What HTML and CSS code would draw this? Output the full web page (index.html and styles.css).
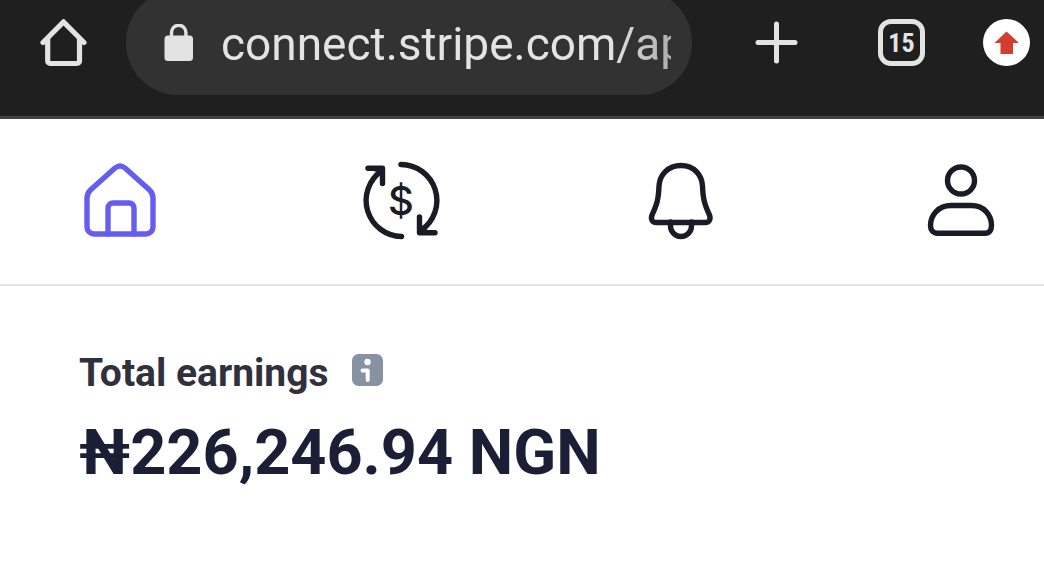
FILE: index.html
```html
<!DOCTYPE html>
<html lang="en">
<head>
    <meta charset="UTF-8">
    <meta name="viewport" content="width=device-width, initial-scale=1.0">
    <title>Total earnings</title>
    <link rel="stylesheet" href="styles.css">
</head>
<body>
    <header class="browser-bar">
        <button class="bar-button" type="button" aria-label="Home page">
            <svg width="48" height="48" viewBox="0 0 48 48" fill="none" stroke="currentColor" stroke-width="5.2" stroke-linecap="round">
                <path d="M3 23.5 23.5 3 44 23.5"/>
                <path d="M7.7 20V42a2.5 2.5 0 0 0 2.5 2.5H37a2.5 2.5 0 0 0 2.5-2.5V20"/>
            </svg>
        </button>

        <div class="address">
            <svg width="30" height="38" viewBox="0 0 30 38" aria-hidden="true">
                <rect x="0.5" y="11.5" width="28.5" height="25.5" rx="3.5" fill="currentColor"/>
                <path d="M7.5 14V8.5a7.2 7.2 0 0 1 14.4 0V14" fill="none" stroke="currentColor" stroke-width="3.4"/>
            </svg>
            <input class="address-input" type="text" aria-label="Address" value="connect.stripe.com/ap">
        </div>

        <button class="bar-button" type="button" aria-label="New tab">
            <svg width="44" height="44" viewBox="0 0 44 44" fill="none" stroke="currentColor" stroke-width="5" stroke-linecap="round">
                <path d="M22.5 3v37M4 21.5h37"/>
            </svg>
        </button>
        <button class="bar-button tab-count" type="button" aria-label="15 open tabs">15</button>
        <button class="bar-button update" type="button" aria-label="Update available">
            <svg width="26" height="24" viewBox="0 0 26 24" fill="currentColor">
                <path d="M12.5 0.5 25 12H19V23H6.5V12H0.5Z"/>
            </svg>
        </button>
    </header>

    <nav class="app-nav">
        <a class="nav-link active" href="#home" aria-label="Home">
            <svg width="80" height="80" viewBox="0 0 80 80">
                <path d="M7 37q0-5 4-8.5L35 7q5-4 10 0l24 21.5q4 3.5 4 8.5v29a7 7 0 0 1-7 7H14a7 7 0 0 1-7-7Z"/>
                <path d="M28 73V47a5 5 0 0 1 5-5h16a5 5 0 0 1 5 5v26"/>
            </svg>
        </a>
        <a class="nav-link" href="#payouts" aria-label="Payouts">
            <svg width="80" height="80" viewBox="0 0 80 80">
                <path d="M41 3.5a36 36 0 0 1 20.5 65.5"/>
                <path d="M59.5 56v15.7H75M60 66.5v4.5h6"/>
                <path d="M41.5 75.5a36 36 0 0 1-20-65.5"/>
                <path d="M22.500 22.5V7.200H8M22 12.5V8h-6"/>
                <text class="currency" x="41" y="54" text-anchor="middle">$</text>
            </svg>
        </a>
        <a class="nav-link" href="#notifications" aria-label="Notifications">
            <svg width="80" height="80" viewBox="0 0 80 80">
                <path d="M40 4.5C27 4.5 18.500 14 18 25 17.500 38 16 43 11.500 53 9 58 11 61.500 15.500 61.500H64C68.500 61.500 70.500 58 68 53 63.500 43 62 38 61.500 25 61 14 53 4.500 40 4.5Z"/>
                <path d="M29.500 61v4a10.500 10.500 0 0 0 21 0V61"/>
            </svg>
        </a>
        <a class="nav-link" href="#account" aria-label="Account">
            <svg width="80" height="80" viewBox="0 0 80 80">
                <circle cx="40" cy="19.5" r="13.500"/>
                <path d="M30 44.500H50.500C63 44.500 70.500 54 70.500 64.500 70.500 69 68.500 72.200 64 72.200H16.500C12 72.200 9.500 69 9.500 64.500 9.500 54 17.500 44.500 30 44.500Z"/>
            </svg>
        </a>
    </nav>

    <main class="earnings">
        <div class="earnings-label">
            <h1>Total earnings</h1>
            <button class="info" type="button" aria-label="About total earnings">
                <svg width="32" height="32" viewBox="0 0 32 32">
                    <rect width="31" height="32" rx="6.5" fill="#8792a2"/>
                    <circle cx="15.5" cy="8" r="3.2" fill="#fff"/>
                    <path d="M10.500 16.5h5.2V26" fill="none" stroke="#fff" stroke-width="4" stroke-linecap="round" stroke-linejoin="round"/>
                </svg>
            </button>
        </div>
        <p class="amount">₦226,246.94 NGN</p>
    </main>
</body>
</html>
```
FILE: styles.css
```css
* {
    margin: 0;
    padding: 0;
    box-sizing: border-box;
}

body {
    background-color: #fff;
    color: #1a1f36;
    font-family: Roboto, sans-serif;
    overflow-x: hidden;
}

svg {
    display: block;
}

button {
    border: none;
    background: none;
    color: inherit;
    font-family: inherit;
    cursor: pointer;
}

/* Browser toolbar */
.browser-bar {
    display: flex;
    align-items: center;
    height: 119px;
    padding: 0 14px 31px 40px;
    background-color: #1f1f1f;
    border-bottom: 3px solid #424242;
    color: #e3e3e3;
}

.bar-button {
    flex: none;
}

.address {
    display: flex;
    flex: 1;
    align-items: center;
    gap: 27px;
    min-width: 0;
    height: 105px;
    margin: 0 62px 0 38px;
    padding: 0 21px 0 38px;
    border-radius: 52px;
    background-color: #323232;
}

.address svg {
    flex: none;
}

.address-input {
    flex: 1;
    min-width: 0;
    padding-top: 2px;
    border: none;
    outline: none;
    background: none;
    color: inherit;
    font-family: inherit;
    font-size: 46px;
    line-height: 60px;
    -webkit-mask-image: linear-gradient(to right, #000 calc(100% - 60px), rgba(0, 0, 0, 0.7));
    mask-image: linear-gradient(to right, #000 calc(100% - 60px), rgba(0, 0, 0, 0.7));
}

.tab-count {
    width: 47px;
    height: 47px;
    margin: 0 58px 0 80px;
    border: 5px solid #e3e3e3;
    border-radius: 13px;
    font-family: "Roboto Condensed", "Liberation Sans Narrow", Roboto, sans-serif;
    font-size: 26px;
    font-weight: 700;
    line-height: 36px;
}

.update {
    display: flex;
    align-items: center;
    justify-content: center;
    width: 47px;
    height: 47px;
    border-radius: 50%;
    background-color: #fff;
    color: #d23f31;
}

/* App navigation */
.app-nav {
    display: flex;
    justify-content: space-between;
    padding: 42px 43px 43px 80px;
    border-bottom: 2px solid #e3e3e3;
}

.nav-link {
    color: #1a1b25;
    text-decoration: none;
}

.nav-link svg {
    fill: none;
    stroke: currentColor;
    stroke-width: 5.4;
    stroke-linecap: round;
    stroke-linejoin: round;
}

.nav-link.active {
    color: #665df0;
}

.nav-link .currency {
    fill: currentColor;
    stroke: none;
    font-family: Inter, sans-serif;
    font-size: 40px;
    font-weight: 500;
}

/* Earnings */
.earnings {
    padding: 61px 79px;
}

.earnings-label {
    display: flex;
    align-items: flex-start;
    gap: 23px;
}

.earnings-label h1 {
    color: #30313d;
    font-size: 39px;
    font-weight: 700;
    line-height: 52px;
}

.info {
    margin-top: 7px;
}

.amount {
    font-size: 63px;
    font-weight: 700;
    line-height: 80px;
    margin-top: 14px;
}
```
